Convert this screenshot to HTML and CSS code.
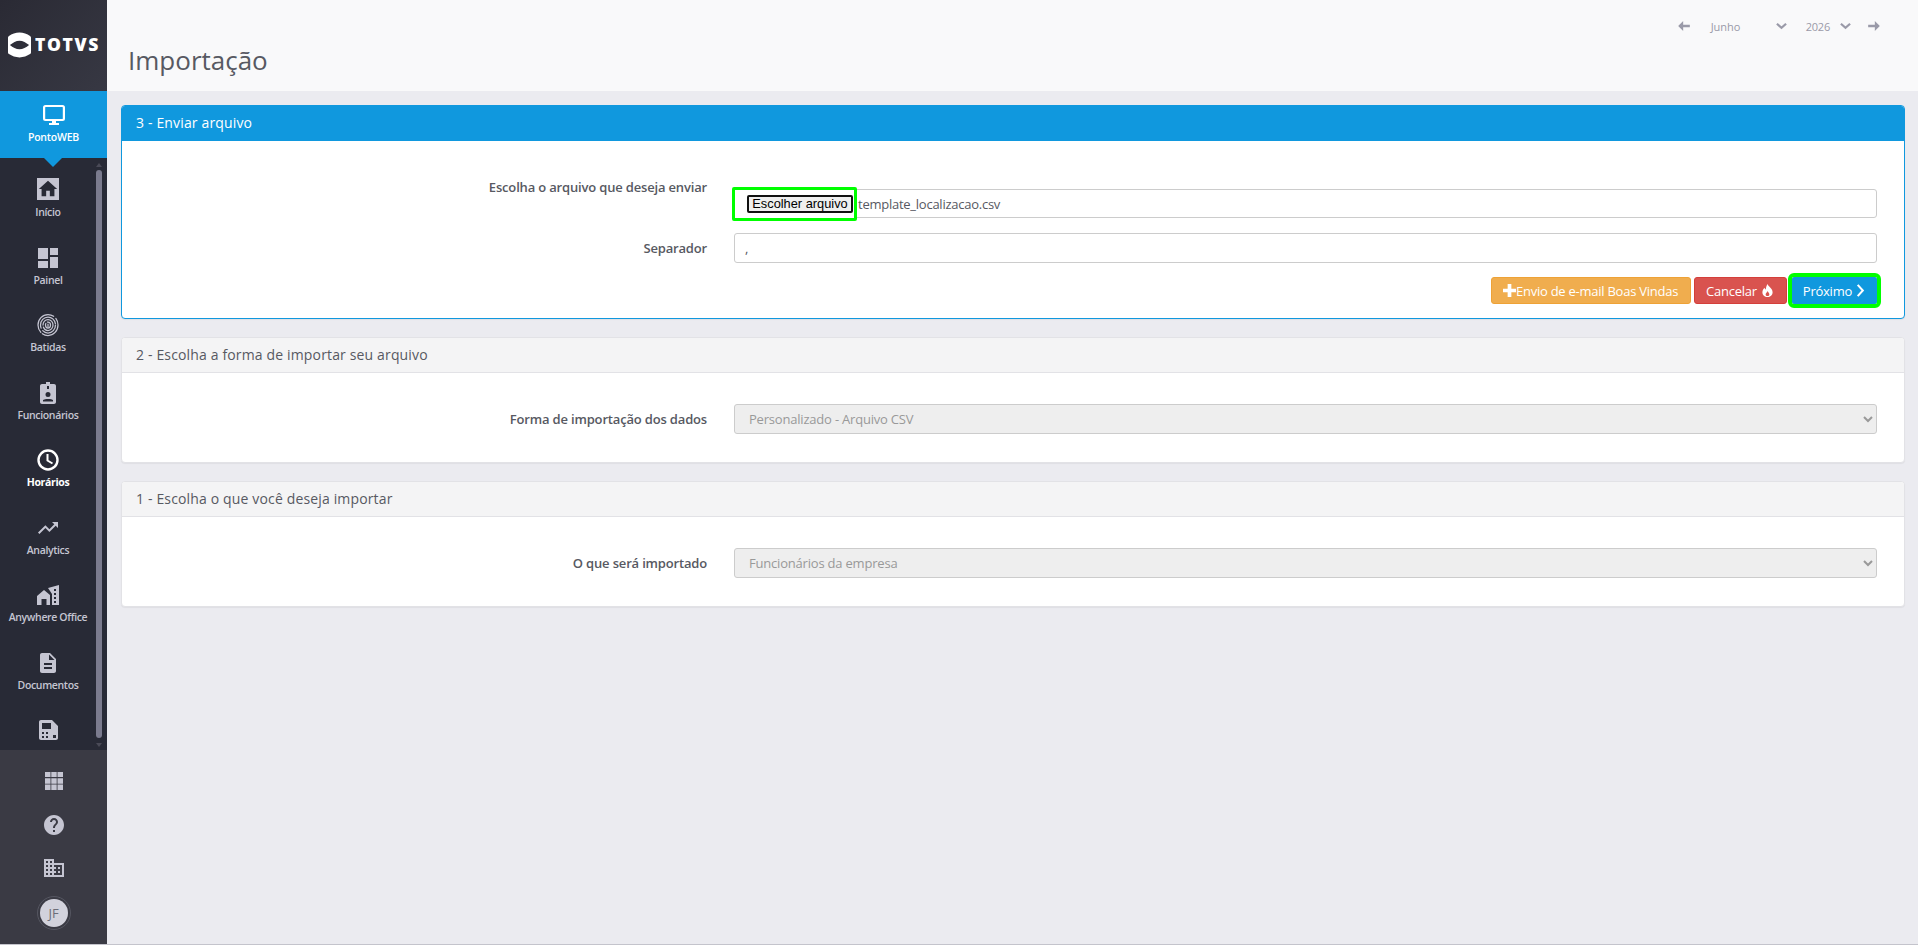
FILE: index.html
```html
<!DOCTYPE html>
<html lang="pt-BR">
<head>
    <meta charset="UTF-8">
    <meta name="viewport" content="width=device-width, initial-scale=1.0">
    <title>Importação</title>
    <link rel="stylesheet" href="styles.css">
</head>
<body>
    <div class="app">
        <aside class="sidebar">
            <div class="logo">
                <svg class="logo-mark" viewBox="0 0 24 26"><path fill="#fff" fill-rule="evenodd" d="M12 0c4 0 8 1.500 11 3.500 .6 .4 1 1 1 1.800v15.400c0 .8-.4 1.400-1 1.800-3 2-7 3.500-11 3.500S4 24.500 1 22.500c-.6-.4-1-1-1-1.800V5.300c0-.8 .4-1.400 1-1.800C4 1.500 8 0 12 0zM12 8.500C8.500 8.500 5 10.500 2 13c3 2.500 6.500 4.500 10 4.500s7-2 10-4.500c-3-2.500-6.500-4.500-10-4.500z"/></svg>
                <span class="logo-text">TOTVS</span>
            </div>
            <a class="module">
                <svg class="icon" viewBox="0 0 24 24"><path fill="none" stroke="#fff" stroke-width="2.200" d="M3.500 3h17c.8 0 1.400 .6 1.400 1.400v11.200c0 .8-.6 1.400-1.400 1.400h-17c-.8 0-1.400-.6-1.400-1.400V4.400C2.100 3.600 2.700 3 3.500 3z"/><path fill="#fff" d="M10 17h4v3h3v2H7v-2h3z"/></svg>
                <span>PontoWEB</span>
            </a>
            <div class="nav-wrap">
                <nav class="nav">
                    <a class="nav-item">
                        <span class="home-box"><svg viewBox="0 0 24 24"><path fill="#282a36" d="M10 20v-6h4v6h5v-8h3L12 3 2 12h3v8z"/></svg></span>
                        <span>Início</span>
                    </a>
                    <a class="nav-item">
                        <svg class="icon" viewBox="0 0 24 24"><path fill="#c5c5d2" d="M2 13h10V2H2v11zm0 9h10v-7H2v7zm12 0h8V11h-8v11zm0-20v7h8V2h-8z"/></svg>
                        <span>Painel</span>
                    </a>
                    <a class="nav-item">
                        <svg class="icon" viewBox="0 0 24 24"><g fill="none" stroke="#c5c5d2" stroke-width="1.250" stroke-linecap="round"><ellipse cx="12" cy="12" rx="10" ry="10.500" stroke-dasharray="22 2 30 3"/><ellipse cx="12" cy="12" rx="7.500" ry="8" stroke-dasharray="18 3 26"/><ellipse cx="12" cy="12" rx="5" ry="5.500" stroke-dasharray="14 2 20"/><ellipse cx="12" cy="12" rx="2.500" ry="3" stroke-dasharray="10 2"/><path d="M12 11v3"/></g></svg>
                        <span>Batidas</span>
                    </a>
                    <a class="nav-item">
                        <svg class="icon" viewBox="0 0 24 24"><path fill="#c5c5d2" fill-rule="evenodd" d="M6 3h4V1h4v2h4c1.100 0 2 .9 2 2v16c0 1.100-.9 2-2 2H6c-1.100 0-2-.9-2-2V5c0-1.100 .9-2 2-2zm6 8a2.500 2.500 0 1 0 0 5 2.500 2.500 0 0 0 0-5zm-5 8v1.500h10V19c-1-1.500-8.500-1.500-10 0zM11 5v3h2V5z"/></svg>
                        <span>Funcionários</span>
                    </a>
                    <a class="nav-item active">
                        <svg class="icon" viewBox="0 0 24 24"><circle cx="12" cy="12" r="9.500" fill="none" stroke="#fff" stroke-width="2.400"/><path fill="none" stroke="#fff" stroke-width="2" d="M11.500 6v6.500l5 3"/></svg>
                        <span>Horários</span>
                    </a>
                    <a class="nav-item">
                        <svg class="icon" viewBox="0 0 24 24"><path fill="#c5c5d2" d="M16 6l2.290 2.290-4.880 4.880-4-4L2 16.590 3.410 18l6-6 4 4 6.300-6.290L22 12V6z"/></svg>
                        <span>Analytics</span>
                    </a>
                    <a class="nav-item">
                        <svg class="icon" viewBox="0 0 24 24"><path fill="#c5c5d2" fill-rule="evenodd" d="M1 13 8 7l6 5v10h-3.500v-6h-5v6H1zM12 5l11-3v20h-7V11zm6 1v2h2V6zm0 4v2h2v-2zm0 4v2h2v-2zm0 4v2h2v-2z"/></svg>
                        <span>Anywhere Office</span>
                    </a>
                    <a class="nav-item">
                        <svg class="icon" viewBox="0 0 24 24"><path fill="#c5c5d2" d="M14 2H6c-1.100 0-1.990 .9-1.990 2L4 20c0 1.100 .89 2 1.990 2H18c1.100 0 2-.9 2-2V8l-6-6zm2 16H8v-2h8v2zm0-4H8v-2h8v2zm-3-5V3.500L18.500 9H13z"/></svg>
                        <span>Documentos</span>
                    </a>
                    <a class="nav-item">
                        <svg class="icon" viewBox="0 0 24 24"><path fill="#c5c5d2" fill-rule="evenodd" d="M5 2h11l6 6v12c0 1.100-.9 2-2 2H5c-1.100 0-2-.9-2-2V4c0-1.100 .9-2 2-2zm1 3v6h9V5zm0 9v2h2v-2zm4 0v2h2v-2zM6 18v2h2v-2zm4 0v2h2v-2zm7-1v3h3v-3z"/></svg>
                    </a>
                </nav>
                <div class="scroll-up"></div>
                <div class="scroll-thumb"></div>
                <div class="scroll-down"></div>
            </div>
            <div class="sidebar-bottom">
                <svg class="tool" viewBox="0 0 24 24"><path fill="#c5c5d2" d="M3 8h5.500V3H3v5zm6.300 13h5.400v-5.500H9.300V21zM3 21h5.500v-5.500H3V21zm0-6.300h5.500V9.300H3v5.400zm6.300 0h5.400V9.300H9.300v5.400zM15.500 3v5H21V3h-5.500zM9.300 8h5.400V3H9.300v5zm6.200 6.700H21V9.300h-5.500v5.400zm0 6.300H21v-5.500h-5.500V21z"/></svg>
                <svg class="tool" viewBox="0 0 24 24"><path fill="#c5c5d2" d="M12 2C6.480 2 2 6.480 2 12s4.480 10 10 10 10-4.480 10-10S17.520 2 12 2zm1 17h-2v-2h2v2zm2.070-7.750l-.9 .92C13.450 12.900 13 13.500 13 15h-2v-.5c0-1.100 .45-2.100 1.170-2.830l1.240-1.260c.37-.36 .59-.86 .59-1.410 0-1.100-.9-2-2-2s-2 .9-2 2H8c0-2.210 1.790-4 4-4s4 1.790 4 4c0 .88-.36 1.680-.93 2.250z"/></svg>
                <svg class="tool" viewBox="0 0 24 24"><path fill="#c5c5d2" d="M12 7V3H2v18h20V7H12zM6 19H4v-2h2v2zm0-4H4v-2h2v2zm0-4H4V9h2v2zm0-4H4V5h2v2zm4 12H8v-2h2v2zm0-4H8v-2h2v2zm0-4H8V9h2v2zm0-4H8V5h2v2zm10 12h-8v-2h2v-2h-2v-2h2v-2h-2V9h8v10zm-2-8h-2v2h2v-2zm0 4h-2v2h2v-2z"/></svg>
                <div class="avatar"><span>JF</span></div>
            </div>
        </aside>

        <main class="content">
            <header class="page-header">
                <div class="date-nav">
                    <svg class="date-arrow" viewBox="0 0 14 12"><path fill="#9a9aa8" d="M6 0 0 6l6 6V7.500h8v-3H6z"/></svg>
                    <span class="month">Junho</span>
                    <svg class="date-chevron" viewBox="0 0 12 8"><path fill="none" stroke="#9a9aa8" stroke-width="2.400" d="M1 1.500l5 4.500 5-4.500"/></svg>
                    <span class="year">2026</span>
                    <svg class="date-chevron" viewBox="0 0 12 8"><path fill="none" stroke="#9a9aa8" stroke-width="2.400" d="M1 1.500l5 4.500 5-4.500"/></svg>
                    <svg class="date-arrow next" viewBox="0 0 14 12"><path fill="#9a9aa8" d="M8 0l6 6-6 6V7.500H0v-3h8z"/></svg>
                </div>
                <h1>Importação</h1>
            </header>

            <section class="panel panel-primary">
                <div class="panel-heading">3 - Enviar arquivo</div>
                <div class="panel-body upload-body">
                    <div class="form-row">
                        <label class="label-up">Escolha o arquivo que deseja enviar</label>
                        <div class="file-field">
                            <span class="file-hilite"><button class="file-btn" type="button">Escolher arquivo</button></span>
                            <span class="file-name">template_localizacao.csv</span>
                        </div>
                    </div>
                    <div class="form-row">
                        <label>Separador</label>
                        <input class="form-control" type="text" value=",">
                    </div>
                    <div class="actions">
                        <button class="btn btn-warning" type="button">
                            <svg class="btn-icon" viewBox="0 0 14 14"><path fill="#fff" d="M5 0h4v5h5v4H9v5H5V9H0V5h5z"/></svg>Envio de e-mail Boas Vindas
                        </button>
                        <button class="btn btn-danger" type="button">
                            Cancelar
                            <svg class="btn-icon flame" viewBox="0 0 12 14"><path fill="#fff" fill-rule="evenodd" d="M6 0c.5 2.500 5.500 4.500 5.500 8.800C11.500 12 9 14 6 14S.5 12 .5 8.800C.5 6.500 2 5 2.800 4c.2 1 .7 1.700 1.300 2C4.400 4 5 1.500 6 0zm.2 7.500C5.500 9 4 9.800 4 11.300 4 12.400 5 13 6 13s2-.6 2-1.700c0-1.500-1.300-2.300-1.800-3.800z"/></svg>
                        </button>
                        <button class="btn btn-primary hilite" type="button">
                            Próximo
                            <svg class="btn-icon chevron" viewBox="0 0 9 14"><path fill="none" stroke="#fff" stroke-width="2.200" d="M1.500 1 7 7l-5.500 6"/></svg>
                        </button>
                    </div>
                </div>
            </section>

            <section class="panel">
                <div class="panel-heading">2 - Escolha a forma de importar seu arquivo</div>
                <div class="panel-body">
                    <div class="form-row">
                        <label>Forma de importação dos dados</label>
                        <select class="form-control" disabled>
                            <option>Personalizado - Arquivo CSV</option>
                        </select>
                    </div>
                </div>
            </section>

            <section class="panel">
                <div class="panel-heading">1 - Escolha o que você deseja importar</div>
                <div class="panel-body">
                    <div class="form-row">
                        <label>O que será importado</label>
                        <select class="form-control" disabled>
                            <option>Funcionários da empresa</option>
                        </select>
                    </div>
                </div>
            </section>
        </main>
    </div>
</body>
</html>
```

FILE: styles.css
```css
* {
    box-sizing: border-box;
}

html, body {
    height: 100%;
}

body {
    margin: 0;
    font-family: "Open Sans", Arial, sans-serif;
    font-size: 13px;
    color: #575962;
    background-color: #ebebf0;
    border-bottom: 1px solid #c4c4cc;
    overflow: hidden;
}

.app {
    display: flex;
    height: 100%;
}

/* sidebar */
.sidebar {
    width: 107px;
    flex-shrink: 0;
    display: flex;
    flex-direction: column;
    background-color: #282a36;
}

.logo {
    height: 91px;
    display: flex;
    align-items: center;
    padding: 0 0 2px 8px;
    gap: 4px;
    background: linear-gradient(135deg, #2a2a34, #373843);
}

.logo-mark {
    width: 23px;
    height: 26px;
}

.logo-text {
    color: #fff;
    font-size: 17.500px;
    font-weight: 800;
    letter-spacing: 1.600px;
    line-height: 1;
}

.module {
    position: relative;
    height: 67px;
    padding-top: 12px;
    display: flex;
    flex-direction: column;
    align-items: center;
    background-color: #1098de;
    color: #fff;
    font-size: 10.500px;
    font-weight: 600;
    letter-spacing: -.2px;
}

.module::after {
    content: "";
    position: absolute;
    left: 44px;
    bottom: -9px;
    border-left: 9px solid transparent;
    border-right: 9px solid transparent;
    border-top: 9px solid #1098de;
}

.module span {
    margin-top: 3px;
}

.icon {
    width: 24px;
    height: 24px;
}

.nav-wrap {
    position: relative;
    flex: 1;
    min-height: 0;
    overflow: hidden;
}

.nav {
    padding-top: 8px;
    width: 96px;
}

.nav-item {
    height: 67.500px;
    padding-top: 12px;
    display: flex;
    flex-direction: column;
    align-items: center;
    color: #c5c5d2;
    font-size: 10.500px;
    font-weight: 600;
    letter-spacing: -.35px;
    white-space: nowrap;
}

.nav-item span:last-child {
    margin-top: 3px;
}

.nav-item.active {
    color: #fff;
    font-weight: 700;
}

.home-box {
    width: 22px;
    height: 22px;
    margin-bottom: 2px;
    background-color: #c5c5d2;
    display: flex;
    align-items: center;
    justify-content: center;
}

.home-box svg {
    width: 22px;
    height: 22px;
}

.scroll-thumb {
    position: absolute;
    left: 96px;
    top: 12px;
    width: 6px;
    height: 568px;
    border-radius: 3px;
    background-color: #7b7b8e;
}

.scroll-up,
.scroll-down {
    position: absolute;
    left: 96px;
    border-left: 3px solid transparent;
    border-right: 3px solid transparent;
}

.scroll-up {
    top: 5px;
    border-bottom: 4px solid #4a4a57;
}

.scroll-down {
    bottom: 3px;
    border-top: 4px solid #4a4a57;
}

.sidebar-bottom {
    height: 194px;
    padding-top: 19px;
    display: flex;
    flex-direction: column;
    align-items: center;
    gap: 19.500px;
    background-color: #3a3a44;
}

.tool {
    width: 24px;
    height: 24px;
}

.avatar {
    width: 34px;
    height: 34px;
    margin-top: -4px;
    border: 1px solid #555661;
    border-radius: 50%;
    padding: 2px;
}

.avatar span {
    display: flex;
    align-items: center;
    justify-content: center;
    width: 100%;
    height: 100%;
    border-radius: 50%;
    background-color: #d2d2dc;
    color: #6c6d78;
    font-size: 13px;
}

/* conteudo */
.content {
    flex: 1;
    min-width: 0;
}

.page-header {
    height: 91px;
    margin-bottom: 14px;
    padding: 19px 38px 0 22px;
    background-color: #f9f9fa;
}

.date-nav {
    height: 14px;
    display: flex;
    align-items: center;
    justify-content: flex-end;
    color: #9a9aa8;
    font-size: 11px;
}

.date-arrow {
    width: 12px;
    height: 10px;
}

.date-chevron {
    width: 11px;
    height: 8px;
}

.month {
    width: 65px;
    margin-left: 21px;
}

.year {
    margin-left: 19px;
    margin-right: 10px;
    letter-spacing: -.2px;
}

.date-arrow.next {
    margin-left: 17px;
}

h1 {
    margin: 9px 0 0 -1px;
    font-size: 26px;
    font-weight: 400;
    line-height: 36px;
    color: #575962;
}

.panel {
    margin: 0 13px 18px 14px;
    background-color: #fff;
    border: 1px solid #e2e2e6;
    border-radius: 4px;
    box-shadow: 0 1px 1px rgba(0, 0, 0, .05);
}

.panel-primary {
    border-color: #1098de;
}

.panel-heading {
    height: 35px;
    padding: 0 14px 2px;
    display: flex;
    align-items: center;
    font-size: 14px;
    letter-spacing: .15px;
    background-color: #f4f4f5;
    border-bottom: 1px solid #e2e2e6;
    border-radius: 3px 3px 0 0;
}

.panel-primary .panel-heading {
    background-color: #1098de;
    border-bottom-color: #1098de;
    color: #fff;
}

.panel-body {
    padding: 31px 27px 28px 0;
}

.upload-body {
    padding-top: 48px;
    padding-bottom: 14px;
}

.form-row {
    display: flex;
    gap: 27px;
}

.form-row + .form-row {
    margin-top: 15px;
}

.form-row label {
    width: 585px;
    flex-shrink: 0;
    text-align: right;
    font-weight: 600;
    letter-spacing: -.17px;
    padding-top: 6px;
}

.form-row .label-up {
    padding-top: 0;
    margin-top: -11px;
}

.form-control {
    flex: 1;
    min-width: 0;
    height: 30px;
    padding: 0 10px;
    border: 1px solid #ccc;
    border-radius: 3px;
    font-family: inherit;
    font-size: 13px;
    color: #575962;
    background-color: #fff;
}

select.form-control {
    background-color: #eee;
    color: #999;
    opacity: 1;
    letter-spacing: -.2px;
}

.file-field {
    flex: 1;
    position: relative;
    height: 29px;
    padding-left: 123px;
    display: flex;
    align-items: center;
    border: 1px solid #ccc;
    border-radius: 3px;
}

.file-hilite {
    position: absolute;
    left: -3px;
    top: -3px;
    width: 125px;
    height: 34px;
    border: 3px solid #00ff00;
    border-radius: 2px;
    display: flex;
    align-items: center;
    justify-content: flex-end;
    padding-right: 1px;
    background-color: #fff;
}

.file-btn {
    width: 106px;
    height: 18px;
    padding: 0;
    border: 2px solid #111;
    border-radius: 2px;
    background-color: #efefef;
    color: #000;
    font-family: "Liberation Sans", Arial, sans-serif;
    font-size: 12.800px;
    line-height: 1;
}

.file-name {
    color: #575962;
    letter-spacing: -.25px;
}

.actions {
    margin-top: 14px;
    display: flex;
    justify-content: flex-end;
    gap: 3px;
}

.btn {
    height: 27px;
    padding: 0 12px 0 11px;
    display: flex;
    align-items: center;
    border: 1px solid transparent;
    border-radius: 3px;
    font-family: inherit;
    font-size: 13px;
    letter-spacing: -.25px;
    color: #fff;
}

.btn-warning {
    background-color: #f0ad4e;
    border-color: #eea236;
}

.btn-danger {
    background-color: #d9534f;
    border-color: #d43f3a;
}

.btn-primary {
    background-color: #1098de;
    border-color: #1098de;
    margin-left: 2px;
    padding: 0 11px 0 10px;
}

.hilite {
    outline: 4px solid #00ff00;
    outline-offset: 0;
    border-radius: 2px;
}

.btn-icon {
    width: 13px;
    height: 13px;
    flex-shrink: 0;
}

.flame {
    margin-left: 4px;
}

.chevron {
    width: 9px;
    margin-left: 4px;
}
```
